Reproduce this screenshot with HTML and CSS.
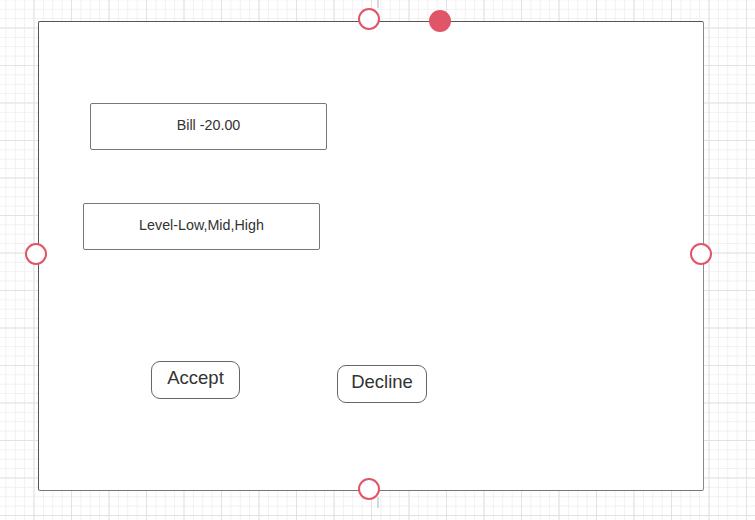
FILE: index.html
```html
<!DOCTYPE html>
<html>
<head>
<meta charset="utf-8">
<link rel="stylesheet" href="styles.css">
</head>
<body>
<div class="canvas">
  <div class="guide guide-top"></div>
  <div class="guide guide-bottom"></div>
  <div class="frame">
    <div class="field field-bill">Bill -20.00</div>
    <div class="field field-level">Level-Low,Mid,High</div>
    <div class="actions">
      <div class="btn btn-accept">Accept</div>
      <div class="btn btn-decline">Decline</div>
    </div>
    <span class="handle handle-top"></span>
    <span class="handle handle-rotate"></span>
    <span class="handle handle-left"></span>
    <span class="handle handle-right"></span>
    <span class="handle handle-bottom"></span>
  </div>
</div>
</body>
</html>
```
FILE: styles.css
```css
html, body {
  margin: 0;
  padding: 0;
}
body {
  width: 755px;
  height: 520px;
  overflow: hidden;
  font-family: "Liberation Sans", Arial, sans-serif;
  color: #333;
}
.canvas {
  position: relative;
  width: 755px;
  height: 520px;
  padding-top: 21px;
  padding-left: 38px;
  box-sizing: border-box;
  background-color: #fff;
  background-image:
    linear-gradient(to right, #e2e2e2 1px, transparent 1px),
    linear-gradient(to bottom, #e2e2e2 1px, transparent 1px),
    linear-gradient(to right, #f0f0f0 1px, transparent 1px),
    linear-gradient(to bottom, #f0f0f0 1px, transparent 1px);
  background-size: 37.5px 37.5px, 37.5px 37.5px, 9.375px 9.375px, 9.375px 9.375px;
  background-position: 33.5px 27.5px, 33.5px 27.5px, 5.4px 8.75px, 5.4px 8.75px;
}
.guide {
  position: absolute;
  left: 377px;
  width: 2px;
  background: #d8d8d8;
}
.guide-top { top: 0; height: 8px; }
.guide-bottom { top: 497px; height: 11px; }
.frame {
  position: relative;
  width: 666px;
  height: 470px;
  box-sizing: border-box;
  border: 1px solid #555;
  border-right-color: #8a8a8a;
  border-bottom-color: #777;
  border-radius: 2px;
  background: #fff;
  padding-top: 81px;
}
.field {
  width: 237px;
  height: 47px;
  box-sizing: border-box;
  border: 1px solid #777;
  border-radius: 2px;
  display: flex;
  align-items: center;
  justify-content: center;
  font-size: 14.3px;
  padding-bottom: 4px;
}
.field-bill { margin-left: 51px; }
.field-level { margin-left: 44px; margin-top: 53px; }
.actions {
  display: flex;
  align-items: flex-start;
  margin-top: 111px;
  margin-left: 112px;
  gap: 97px;
}
.btn {
  height: 38px;
  box-sizing: border-box;
  border: 1px solid #666;
  border-radius: 9px;
  display: flex;
  justify-content: center;
  font-size: 18.5px;
  padding-top: 5px;
}
.btn-accept { width: 89px; }
.btn-decline { width: 90px; margin-top: 4px; }
.handle {
  position: absolute;
  width: 22px;
  height: 22px;
  box-sizing: border-box;
  border-radius: 50%;
  border: 2.5px solid #e05567;
  background: #fff;
}
.handle-top { left: 319px; top: -14px; }
.handle-rotate { left: 390px; top: -12px; background: #e05567; }
.handle-left { left: -14px; top: 221px; }
.handle-right { left: 651px; top: 221px; }
.handle-bottom { left: 319px; top: 456px; }
```
